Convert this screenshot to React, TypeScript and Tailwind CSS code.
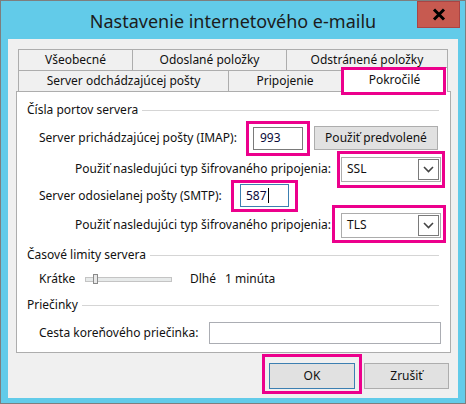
import React from "react"

// Outlook "Internet E-mail Settings" dialog, Slovak, Windows 8 chrome
// Pink boxes are hand-drawn annotations laid over the controls.

function Mark({ className }: { className: string }) {
  return <div className={`pointer-events-none absolute border-[3px] border-[#ec008c] ${className}`} />
}

function Chevron() {
  return (
    <svg width="11" height="7" viewBox="0 0 11 7">
      <path d="M1 1 L5.5 5.5 L10 1" fill="none" stroke="#444" strokeWidth="1.6" />
    </svg>
  )
}

function Select({ value }: { value: string }) {
  return (
    <div className="flex h-[25px] w-[100px] items-center border border-[#acacac] bg-white p-[1px]">
      <span className="flex-1 pl-[4px]">{value}</span>
      <div className="flex h-[21px] w-[21px] items-center justify-center border border-[#7a7a7a] bg-white">
        <Chevron />
      </div>
    </div>
  )
}

function Header({ text, className }: { text: string; className: string }) {
  return (
    <div className={`flex h-[18px] items-center ${className}`}>
      <span>{text}</span>
      <div className="ml-[4px] mr-[11px] h-px flex-1 bg-[#d5d5d5]" />
    </div>
  )
}

export default function App() {
  return (
    <div className="h-[404px] w-[466px] border border-[#7e7e7e] bg-[#62cbe9] font-['Noto_Sans',sans-serif] text-[12px] text-[#111]">
      {/* Title bar */}
      <div className="grid h-[38px] grid-cols-[1fr_auto_1fr]">
        <div />
        <div className="pt-[6px] text-[18px] leading-[28px] text-[#1c1c1c]">Nastavenie internetového e-mailu</div>
        <div className="flex justify-end pr-[5px]">
          <div className="flex h-[27px] w-[43px] items-center justify-center border border-[#a44] bg-[#c75a50]">
            <svg width="14" height="13" viewBox="0 0 14 13">
              <path d="M2 1.5 L12 11.5 M12 1.5 L2 11.5" stroke="#000" strokeWidth="3" />
            </svg>
          </div>
        </div>
      </div>

      {/* Body */}
      <div className="mx-[7px] h-[359px] bg-[#f0f0f0] pl-[8px] pr-[7px] pt-[10px]">
        {/* Tabs */}
        <div className="pl-[2px]">
          <div className="flex h-[21px]">
            <div className="flex w-[114px] items-center justify-center border-l border-t border-[#adadad]">Všeobecné</div>
            <div className="flex w-[154px] items-center justify-center border-l border-t border-[#adadad]">Odoslané položky</div>
            <div className="flex w-[162px] items-center justify-center border-l border-r border-t border-[#adadad]">Odstránené položky</div>
          </div>
          <div className="flex h-[21px]">
            <div className="flex w-[210px] items-center justify-center border-l border-t border-[#adadad]">Server odchádzajúcej pošty</div>
            <div className="flex w-[113px] items-center justify-center border-l border-t border-[#adadad]">Pripojenie</div>
            <div className="relative z-10 -mt-[3px] flex h-[25px] w-[107px] items-center justify-center border-l border-r border-t border-[#adadad] bg-white">
              Pokročilé
              <Mark className="-left-[1px] -top-[1px] -bottom-[3px] right-[1px]" />
            </div>
          </div>
        </div>

        {/* Panel */}
        <div className="h-[262px] border border-[#adadad] bg-white pl-[10px]">
          <Header text="Čísla portov servera" className="mt-[9px]" />

          <div className="mt-[7px] flex h-[24px] items-center">
            <span className="ml-[12px] w-[214px]">Server prichádzajúcej pošty (IMAP):</span>
            <div className="relative">
              <div className="flex h-[23px] w-[50px] items-center border border-[#7a7a7a] bg-white pl-[6px] text-[#0a0a3a]">993</div>
              <Mark className="-left-[7px] -right-[7px] -top-[6px] -bottom-[6px]" />
            </div>
            <div className="ml-[11px] flex h-[24px] w-[124px] items-center justify-center border border-[#adadad] bg-[#e1e1e1]">Použiť predvolené</div>
          </div>

          <div className="mt-[7px] flex h-[24px] items-center">
            <span className="ml-[48px]">Použiť nasledujúci typ šifrovaného pripojenia:</span>
            <div className="relative ml-auto mr-[9px]">
              <Select value="SSL" />
              <Mark className="-left-[4px] -right-[4px] -top-[6px] -bottom-[6px]" />
            </div>
          </div>

          <div className="mt-[3px] flex h-[23px] items-center">
            <span className="ml-[12px] w-[201px]">Server odosielanej pošty (SMTP):</span>
            <div className="relative">
              <div className="flex h-[23px] w-[49px] items-center border border-[#3c7fb1] bg-white pl-[5px] text-[#0a0a3a]">
                587<span className="ml-[1px] h-[15px] w-px bg-black" />
              </div>
              <Mark className="-left-[9px] -right-[9px] -top-[4px] -bottom-[5px]" />
            </div>
          </div>

          <div className="mt-[6px] flex h-[24px] items-center">
            <span className="ml-[48px]">Použiť nasledujúci typ šifrovaného pripojenia:</span>
            <div className="relative ml-auto mr-[9px]">
              <Select value="TLS" />
              <Mark className="-left-[9px] -right-[5px] -top-[8px] -bottom-[5px]" />
            </div>
          </div>

          <Header text="Časové limity servera" className="mt-[9px]" />

          <div className="mt-[6px] flex h-[18px] items-center">
            <span className="ml-[12px] w-[46px]">Krátke</span>
            <div className="relative flex h-[12px] w-[87px] items-center">
              <div className="h-[5px] w-full border border-[#c4c4c4] bg-[#e7eaea]" />
              <div className="absolute left-[8px] top-[1px] h-[10px] w-[5px] border border-[#8a8a8a] bg-[#e8e8e8]" />
            </div>
            <span className="ml-[18px]">Dlhé</span>
            <span className="ml-[9px]">1 minúta</span>
          </div>

          <Header text="Priečinky" className="mt-[8px]" />

          <div className="mt-[8px] flex h-[22px] items-center">
            <span className="ml-[12px] w-[170px]">Cesta koreňového priečinka:</span>
            <div className="h-[22px] w-[232px] border border-[#abadb3] bg-white" />
          </div>
        </div>

        {/* Buttons */}
        <div className="mt-[10px] flex justify-end pr-[2px]">
          <div className="relative">
            <div className="flex h-[26px] w-[86px] items-center justify-center border border-[#3c7fb1] bg-[#e1e1e1]">OK</div>
            <Mark className="-left-[7px] -right-[7px] -top-[9px] -bottom-[5px]" />
          </div>
          <div className="ml-[9px] flex h-[26px] w-[85px] items-center justify-center border border-[#adadad] bg-[#e1e1e1]">Zrušiť</div>
        </div>
      </div>
    </div>
  )
}
